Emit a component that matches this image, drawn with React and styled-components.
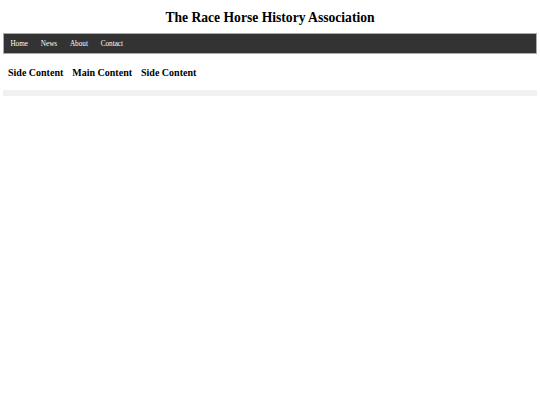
import styled, { createGlobalStyle } from "styled-components";

const GlobalStyle = createGlobalStyle`
  body {
    margin: 0;
    background: #fff;
    font-family: "Liberation Serif", "Times New Roman", serif;
  }
`;

const Page = styled.div`
  padding: 0 3px;
`;

const Header = styled.header`
  text-align: center;
  padding: 10px 0 7px;
`;

const Title = styled.h1`
  margin: 0;
  font-size: 13.6px;
  line-height: 16px;
  font-weight: bold;
  color: #000;
`;

const Nav = styled.nav`
  display: flex;
  align-items: center;
  height: 19px;
  background: #333;
  border: 1px solid #aaa;
`;

const NavLink = styled.a`
  color: #fff;
  font-size: 7.2px;
  text-decoration: none;
  padding: 0 6.4px;
`;

const Content = styled.div`
  display: flex;
  gap: 9px;
  padding: 12px 5px 11px;
`;

const Column = styled.h2`
  margin: 0;
  font-size: 10px;
  line-height: 13px;
  font-weight: bold;
`;

const Footer = styled.footer`
  height: 6px;
  background: #f1f1f1;
`;

export default function App() {
  return (
    <>
      <GlobalStyle />
      <Page>
        <Header>
          <Title>The Race Horse History Association</Title>
        </Header>
        <Nav>
          {["Home", "News", "About", "Contact"].map((item) => (
            <NavLink key={item} href="#">
              {item}
            </NavLink>
          ))}
        </Nav>
        <Content>
          <Column>Side Content</Column>
          <Column>Main Content</Column>
          <Column>Side Content</Column>
        </Content>
        <Footer />
      </Page>
    </>
  );
}
